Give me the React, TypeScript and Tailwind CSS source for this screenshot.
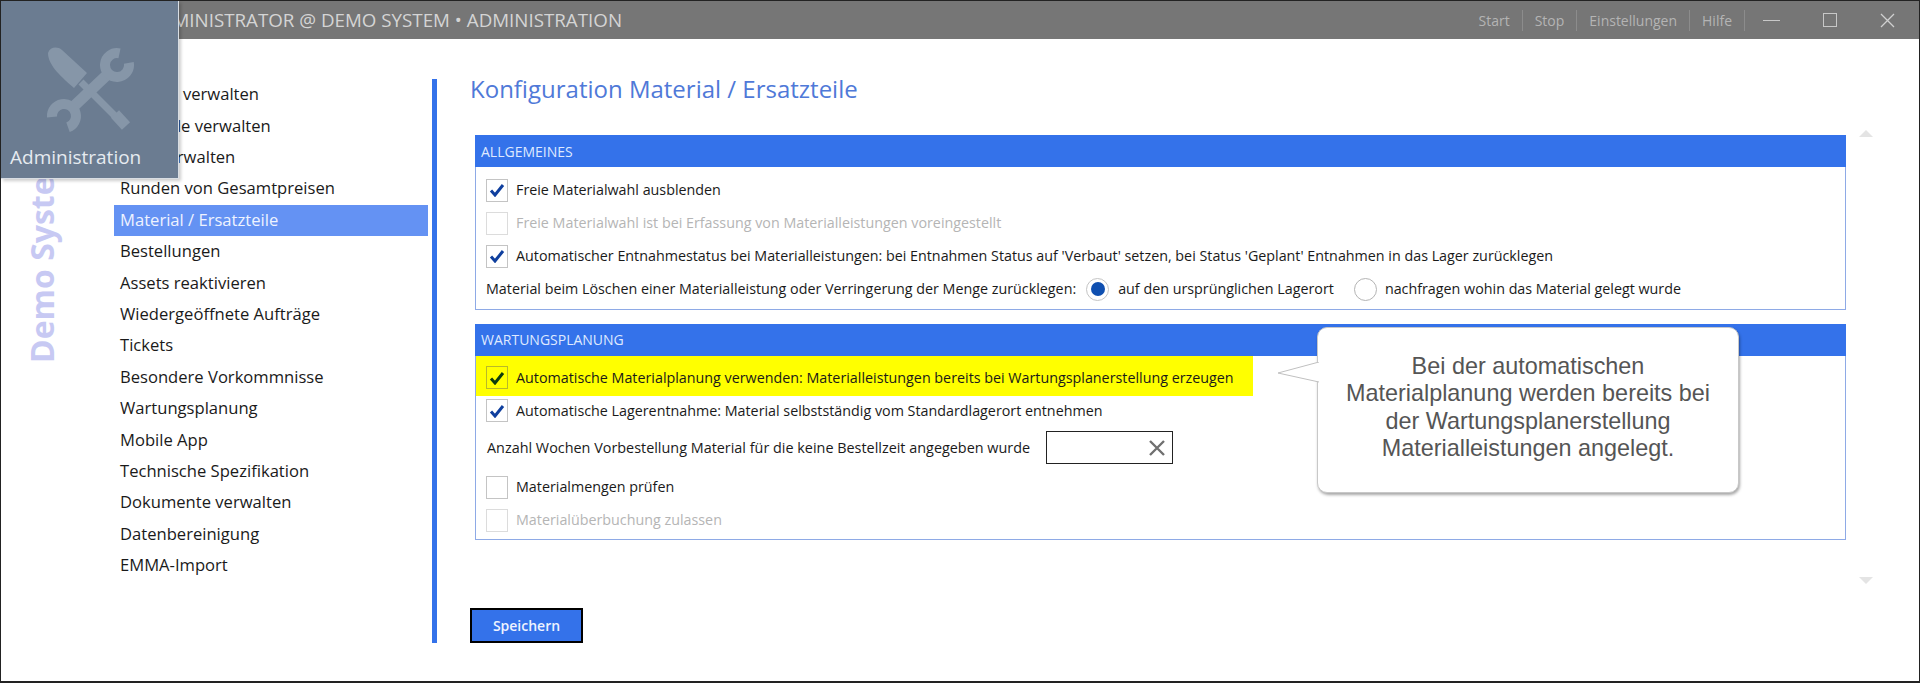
const menuItems = [
  "Gruppe verwalten",
  "Gebäude verwalten",
  "Orte verwalten",
  "Runden von Gesamtpreisen",
  "Material / Ersatzteile",
  "Bestellungen",
  "Assets reaktivieren",
  "Wiedergeöffnete Aufträge",
  "Tickets",
  "Besondere Vorkommnisse",
  "Wartungsplanung",
  "Mobile App",
  "Technische Spezifikation",
  "Dokumente verwalten",
  "Datenbereinigung",
  "EMMA-Import",
];

function Check({ checked, disabled, dark }: { checked?: boolean; disabled?: boolean; dark?: boolean }) {
  return (
    <span
      className={`flex h-[23px] w-[22px] shrink-0 items-center justify-center border ${
        disabled ? "border-[#dcdcdc] bg-white" : dark ? "border-[#b9b928] bg-[#ffff00]" : "border-[#c4c4c4] bg-white"
      }`}
    >
      {checked && (
        <svg width="16" height="14" viewBox="0 0 16 14">
          <path
            d="M2 7.5 L6 12 L14 2"
            fill="none"
            stroke={dark ? "#0d3d0d" : "#0f3f9e"}
            strokeWidth="3"
          />
        </svg>
      )}
    </span>
  );
}

function CheckRow({ label, checked, disabled, className }: { label: string; checked?: boolean; disabled?: boolean; className?: string }) {
  return (
    <div className={`flex items-center gap-[8px] ${className ?? ""}`}>
      <Check checked={checked} disabled={disabled} />
      <span className={disabled ? "text-[#b5b5b5]" : "text-[#1a1a1a]"}>{label}</span>
    </div>
  );
}

function Radio({ on }: { on?: boolean }) {
  return (
    <span className={`flex h-[23px] w-[23px] shrink-0 items-center justify-center rounded-full border ${on ? "border-[#c4c4c4]" : "border-[#b4b4b4]"}`}>
      {on && <span className="h-[14px] w-[14px] rounded-full bg-[#0f4fb0]" />}
    </span>
  );
}

function ToolsIcon() {
  return (
    <svg width="90" height="90" viewBox="0 0 90 90" className="text-[#8696a8]">
      <path d="M3 7 C5 1 12 0 17 4 L42 27 L29 42 C18 32 3 20 3 7 Z" fill="currentColor" />
      <g fill="none" stroke="currentColor">
        <path d="M36 36 L76 76" strokeWidth="7" />
        <path d="M70 68 L81 80" strokeWidth="11" />
        <path d="M27 62 L64 27" strokeWidth="11" />
        <path d="M74.5 7.3 A12 12 0 1 0 83.8 16.9" strokeWidth="10" />
        <path d="M7 71 A12 12 0 1 1 23 81.3" strokeWidth="10" />
      </g>
    </svg>
  );
}

export default function App() {
  return (
    <div className="relative flex h-[683px] w-[1920px] flex-col overflow-hidden border border-b-2 border-[#222222] bg-white font-['Open_Sans',sans-serif] text-[14.3px]">
      {/* title bar */}
      <header className="flex h-[38px] shrink-0 items-center bg-[#767676] pl-[146px] pr-[24px] text-[#d4d4d4]">
        <span className="text-[18.75px]">ADMINISTRATOR @ DEMO SYSTEM • ADMINISTRATION</span>
        <div className="ml-auto flex items-center text-[14px] text-[#b4b4b4]">
          <span className="border-r border-[#8c8c8c] pr-[12px]">Start</span>
          <span className="border-r border-[#8c8c8c] px-[12px]">Stop</span>
          <span className="border-r border-[#8c8c8c] px-[12px]">Einstellungen</span>
          <span className="border-r border-[#8c8c8c] px-[12px]">Hilfe</span>
          <div className="ml-[18px] flex items-center gap-[43px]">
            <span className="h-[1px] w-[17px] bg-[#c8c8c8]" />
            <span className="h-[14px] w-[14px] border border-[#c8c8c8]" />
            <svg width="15" height="15" viewBox="0 0 15 15">
              <path d="M1 1 L14 14 M14 1 L1 14" stroke="#d0d0d0" strokeWidth="1.3" />
            </svg>
          </div>
        </div>
      </header>

      {/* Administration tile */}
      <div className="absolute left-0 top-0 z-10 flex h-[178px] w-[178px] flex-col items-center border-r border-b border-[#d8dde3] bg-[#6b7c91] pt-[45px] shadow-[2px_2px_3px_rgba(0,0,0,0.2)]">
        <ToolsIcon />
        <span className="mt-[7px] w-full pl-[9px] text-[19px] text-[#e6ebf0]">Administration</span>
      </div>

      <div className="flex flex-1">
        {/* vertical system label */}
        <div className="flex w-[113px] shrink-0 justify-start pl-[25px]">
          <span className="mt-[52px] h-[272px] text-left font-bold text-[32px] leading-[32px] text-[#c7c9f3] [writing-mode:vertical-rl] rotate-180">
            Demo System
          </span>
        </div>

        {/* settings menu */}
        <nav className="w-[314px] shrink-0 pt-[40px] text-[16.6px]">
          {menuItems.map((item) => (
            <div
              key={item}
              className={`flex h-[31.4px] items-center pl-[6px] ${
                item === "Material / Ersatzteile" ? "bg-[#6492f3] text-[#eef3ff]" : "text-[#1a1a1a]"
              }`}
            >
              {item}
            </div>
          ))}
        </nav>

        {/* content */}
        <main className="ml-[4px] mt-[40px] h-[564px] flex-1 border-l-[5px] border-[#3472ea] pl-[33px]">
          <h1 className="mt-[-6px] text-[24px] leading-[32px] text-[#4f79d8]">Konfiguration Material / Ersatzteile</h1>

          <div className="flex items-start">
            <div className="ml-[5px] mt-[30px] w-[1371px] shrink-0">
              <section className="border border-t-0 border-[#8eaae6]">
                <h2 className="-mx-px flex h-[32px] items-center bg-[#3472ea] pl-[6px] text-[14px] text-[#dfe9ff]">ALLGEMEINES</h2>
                <div className="px-[10px] pb-[3px] pt-[7px] leading-[32.9px]">
                  <CheckRow className="h-[32.9px]" checked label="Freie Materialwahl ausblenden" />
                  <CheckRow className="h-[32.9px]" disabled label="Freie Materialwahl ist bei Erfassung von Materialleistungen voreingestellt" />
                  <CheckRow className="h-[32.9px]" checked label="Automatischer Entnahmestatus bei Materialleistungen: bei Entnahmen Status auf 'Verbaut' setzen, bei Status 'Geplant' Entnahmen in das Lager zurücklegen" />
                  <div className="flex h-[32.9px] items-center text-[#1a1a1a]">
                    <span>Material beim Löschen einer Materialleistung oder Verringerung der Menge zurücklegen:</span>
                    <span className="ml-[10px]"><Radio on /></span>
                    <span className="ml-[9px]">auf den ursprünglichen Lagerort</span>
                    <span className="ml-[20px]"><Radio /></span>
                    <span className="ml-[8px]">nachfragen wohin das Material gelegt wurde</span>
                  </div>
                </div>
              </section>

              <section className="mt-[14px] border border-t-0 border-[#8eaae6]">
                <h2 className="-mx-px flex h-[32px] items-center bg-[#3472ea] pl-[6px] text-[14px] text-[#dfe9ff]">WARTUNGSPLANUNG</h2>
                <div className="pb-[2px]">
                  <div className="flex h-[40px] w-[777px] items-center gap-[8px] bg-[#ffff00] pl-[10px] pt-[4px] text-[#1a1a1a]">
                    <Check checked dark />
                    <span>Automatische Materialplanung verwenden: Materialleistungen bereits bei Wartungsplanerstellung erzeugen</span>
                  </div>
                  <CheckRow className="h-[30px] px-[10px]" checked label="Automatische Lagerentnahme: Material selbstständig vom Standardlagerort entnehmen" />
                  <div className="flex h-[45px] items-center px-[11px] pb-[1px] text-[14.4px] text-[#1a1a1a]">
                    <span>Anzahl Wochen Vorbestellung Material für die keine Bestellzeit angegeben wurde</span>
                    <div className="ml-[16px] flex h-[33px] w-[127px] items-center justify-end border border-[#222222] pr-[6px]">
                      <svg width="18" height="18" viewBox="0 0 18 18">
                        <path d="M2 2 L16 16 M16 2 L2 16" stroke="#707070" strokeWidth="2.4" />
                      </svg>
                    </div>
                  </div>
                  <CheckRow className="h-[33px] px-[10px]" label="Materialmengen prüfen" />
                  <CheckRow className="h-[33px] px-[10px]" disabled label="Materialüberbuchung zulassen" />
                </div>
              </section>

              <button className="-ml-[5px] mt-[68px] h-[35px] w-[113px] border-2 border-black bg-[#3472ea] text-[14px] font-semibold text-[#eef3ff]">
                Speichern
              </button>
            </div>

            {/* scroll arrows */}
            <div className="ml-[13px] flex h-[479px] w-[14px] flex-col justify-between pt-[25px]">
              <svg width="14" height="7" viewBox="0 0 14 7"><path d="M7 0 L14 7 L0 7 Z" fill="#e4e4e4" /></svg>
              <svg width="14" height="7" viewBox="0 0 14 7"><path d="M0 0 L14 0 L7 7 Z" fill="#e4e4e4" /></svg>
            </div>
          </div>
        </main>
      </div>

      {/* callout */}
      <div className="absolute left-[1316px] top-[326px] flex h-[166px] w-[422px] flex-col items-center rounded-[10px] border border-[#c8c8c8] bg-white pt-[25px] text-center font-['Liberation_Sans',sans-serif] text-[23.4px] leading-[27.3px] text-[#555555] shadow-[1px_2px_3px_rgba(0,0,0,0.35)]">
        Bei der automatischen
        <br />
        Materialplanung werden bereits bei
        <br />
        der Wartungsplanerstellung
        <br />
        Materialleistungen angelegt.
        <svg className="absolute -left-[40px] top-[34px]" width="41" height="22" viewBox="0 0 41 22">
          <path d="M41 0 L0 11 L41 20" fill="#ffffff" stroke="#c0c0c0" />
        </svg>
      </div>
    </div>
  );
}
